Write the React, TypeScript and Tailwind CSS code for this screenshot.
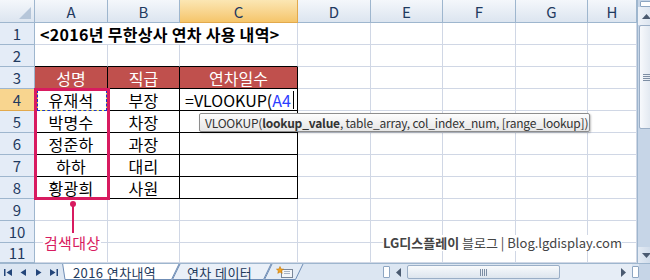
import type { ReactNode } from "react";

const COLS = ["A", "B", "C", "D", "E", "F", "G", "H"];
const NAMES = ["유재석", "박명수", "정준하", "하하", "황광희"];
const TITLES = ["부장", "차장", "과장", "대리", "사원"];
const HEADS = ["성명", "직급", "연차일수"];

function Corner() {
  return (
    <div className="relative border-r border-b border-[#9eb6ce] bg-gradient-to-b from-[#f4f7fb] to-[#dce5f0]">
      <svg className="absolute right-[3px] bottom-[3px]" width="12" height="12" viewBox="0 0 12 12">
        <path d="M12 0V12H0Z" fill="#b6c6d9" />
      </svg>
    </div>
  );
}

function ColHead({ label, active }: { label: string; active: boolean }) {
  return (
    <div
      className={`flex items-center justify-center border-r border-b text-[15px] leading-none text-[#1f3a5f] ${
        active
          ? "border-[#e2a94c] bg-gradient-to-b from-[#fbe6b3] to-[#f5c56a]"
          : "border-[#9eb6ce] bg-gradient-to-b from-[#f4f7fb] to-[#dce5f0]"
      }`}
    >
      {label}
    </div>
  );
}

function RowHead({ n, active }: { n: number; active: boolean }) {
  return (
    <div
      className={`flex items-center justify-center border-r border-b text-[15px] leading-none text-[#1f3a5f] ${
        active ? "border-[#e2a94c] bg-[#f8d58f]" : "border-[#9eb6ce] bg-[#e4ecf7]"
      }`}
    >
      {n}
    </div>
  );
}

function Cell({ r, c }: { r: number; c: number }) {
  const inTable = r >= 3 && r <= 8 && c <= 2;
  const aboveTable = r === 2 && c <= 2;
  const border = inTable
    ? "border-black"
    : aboveTable
      ? "border-r-[#d0d7e5] border-b-black"
      : "border-[#d0d7e5]";

  let content: ReactNode = null;
  let extra = "text-[15px]";
  if (r === 3 && c <= 2) {
    content = HEADS[c];
    extra = "justify-center bg-[#c0504d] text-[16px] text-white";
  } else if (r >= 4 && r <= 8 && c === 0) {
    content = NAMES[r - 4];
    extra = "justify-center text-[16px] tracking-[0.3px]";
  } else if (r >= 4 && r <= 8 && c === 1) {
    content = TITLES[r - 4];
    extra = "justify-center text-[16px] tracking-[0.3px]";
  } else if (r === 4 && c === 2) {
    extra = "pl-[5px] text-[16px]";
    content = (
      <>
        <span>=VLOOKUP(</span>
        <span className="text-[#2b3dff]">A4</span>
        <span className="ml-[2px] h-[18px] w-px bg-black" />
      </>
    );
  }

  return (
    <div
      className={`flex items-center overflow-visible whitespace-nowrap border-r border-b leading-none text-black ${border} ${extra}`}
    >
      {content}
    </div>
  );
}

function Sheet() {
  const cells: ReactNode[] = [<Corner key="corner" />];
  COLS.forEach((c) => cells.push(<ColHead key={c} label={c} active={c === "C"} />));
  for (let r = 1; r <= 11; r++) {
    cells.push(<RowHead key={`h${r}`} n={r} active={r === 4} />);
    if (r === 1) {
      cells.push(
        <div
          key="title"
          className="col-span-3 flex items-center whitespace-nowrap border-r border-b border-[#d0d7e5] pl-[5px] text-[16px] font-bold leading-none tracking-[0.3px] text-black"
        >
          &lt;2016년 무한상사 연차 사용 내역&gt;
        </div>
      );
      COLS.slice(3).forEach((c, i) => cells.push(<Cell key={`${c}1`} r={1} c={i + 3} />));
      continue;
    }
    COLS.forEach((c, i) => cells.push(<Cell key={`${c}${r}`} r={r} c={i} />));
  }

  return (
    <div className="relative grid w-[637px] shrink-0 grid-cols-[35px_73px_72px_118px_73px_72px_73px_72px_49px] grid-rows-[23px_repeat(10,22px)_20px] bg-white">
      {cells}

      {/* range reference ants on A4 */}
      <div className="absolute left-[37px] top-[90px] h-[21px] w-[70px] border border-[#f3e24a]">
        <div className="absolute -inset-px border border-dashed border-[#1d35c9]" />
      </div>

      {/* search target box */}
      <div className="absolute left-[34px] top-[88px] h-[112px] w-[76px] border-[3px] border-[#d81b60]" />
      <div className="absolute left-[70px] top-[201px] size-[6px] rounded-full bg-[#d81b60]" />
      <div className="absolute left-[72px] top-[203px] h-[30px] w-[2px] bg-[#d81b60]" />
      <div className="absolute left-[43px] top-[234px] bg-white px-[1px] text-[15px] leading-[18px] tracking-[0.3px] text-[#d81b60]">
        검색대상
      </div>

      {/* function tooltip */}
      <div className="absolute left-[199px] top-[113px] flex h-[19px] w-[391px] items-center whitespace-nowrap rounded-[2px] border border-[#8d8d8d] bg-gradient-to-b from-[#fdfdfd] to-[#e6e6e6] pl-[5px] text-[12px] leading-none tracking-[-0.2px] text-[#333] shadow-[1px_1px_2px_rgba(0,0,0,0.25)]">
        VLOOKUP(<span className="font-bold">lookup_value</span>, table_array, col_index_num, [range_lookup])
      </div>

      {/* watermark */}
      <div className="absolute left-[383px] top-[235px] whitespace-nowrap bg-white text-[13px] leading-[16px] text-[#444]">
        <span className="font-bold">LG디스플레이</span> 블로그 | Blog.lgdisplay.com
      </div>
    </div>
  );
}

function VScroll() {
  return (
    <div className="flex w-[17px] shrink-0 flex-col border-l border-[#9eb6ce] bg-[#c6d5e7]">
      <div className="mx-[2px] mt-[1px] h-[6px] rounded-[1px] border border-[#8ea6c2] bg-white" />
      <div className="flex h-[18px] items-center justify-center bg-gradient-to-r from-[#eef2f8] to-[#d8e2ee]">
        <svg width="9" height="5" viewBox="0 0 9 5">
          <path d="M4.5 0L9 5H0Z" fill="#4a5a70" />
        </svg>
      </div>
      <div className="mx-[1px] flex h-[104px] items-center justify-center rounded-[2px] border border-[#9aaec6] bg-gradient-to-r from-[#f7f9fc] to-[#dfe6ef]">
        <div className="flex flex-col gap-[1px]">
          <div className="h-px w-[7px] bg-[#7d8ea4]" />
          <div className="h-px w-[7px] bg-[#7d8ea4]" />
          <div className="h-px w-[7px] bg-[#7d8ea4]" />
          <div className="h-px w-[7px] bg-[#7d8ea4]" />
        </div>
      </div>
      <div className="flex-1" />
      <div className="flex h-[16px] items-center justify-center bg-gradient-to-r from-[#e4ebf4] to-[#cbd8e8]">
        <svg width="9" height="5" viewBox="0 0 9 5">
          <path d="M0 0H9L4.5 5Z" fill="#4a5a70" />
        </svg>
      </div>
    </div>
  );
}

function NavButton({ d }: { d: string }) {
  return (
    <div className="flex w-[15px] items-center justify-center">
      <svg width="9" height="9" viewBox="0 0 9 9">
        <path d={d} fill="#24467a" />
      </svg>
    </div>
  );
}

function Tab({
  width,
  points,
  fill,
  children,
  className,
}: {
  width: number;
  points: string;
  fill: string;
  children?: ReactNode;
  className: string;
}) {
  return (
    <div className={`relative flex h-full shrink-0 items-center ${className}`}>
      <svg className="absolute inset-0" width={width} height="16" viewBox={`0 0 ${width} 16`}>
        <polygon points={points} fill={fill} stroke="#6f8db5" strokeWidth="1" />
      </svg>
      {children}
    </div>
  );
}

function TabBar() {
  return (
    <div className="flex h-[17px] items-stretch border-t border-[#9eb6ce] bg-[#dce6f2] text-[13px] leading-[15px] text-[#1e395b]">
      <div className="flex w-[62px] shrink-0 items-stretch pl-[1px]">
        <NavButton d="M0 1H1.5V8H0ZM8 1V8L2.5 4.5Z" />
        <NavButton d="M7 1V8L1.5 4.5Z" />
        <NavButton d="M2 1V8L7.5 4.5Z" />
        <NavButton d="M1 1V8L6.5 4.5ZM7.5 1H9V8H7.5Z" />
      </div>
      <Tab width={118} points="0.5,-1 117.5,-1 109.5,15.5 3,15.5" fill="#ffffff" className="z-20 w-[118px]">
        <span className="relative pl-[11px] tracking-[0.4px]">2016 연차내역</span>
      </Tab>
      <Tab width={100} points="0.5,15.5 8.5,-1 99.5,-1 91.5,15.5" fill="#eaf0f8" className="z-10 -ml-[8px] w-[100px]">
        <span className="relative pl-[15px] tracking-[0.4px]">연차 데이터</span>
      </Tab>
      <Tab width={40} points="0.5,15.5 8.5,-1 39.5,-1 31.5,15.5" fill="#e4ecf6" className="-ml-[8px] w-[40px]">
        <svg className="relative ml-[12px]" width="18" height="13" viewBox="0 0 18 13">
          <rect x="5.5" y="3.5" width="11" height="8" fill="#f4f6f9" stroke="#7b8799" />
          <path d="M8 5.5H14M8 7.5H14" stroke="#a9b4c4" />
          <path
            d="M4 0.5L5 3L7.5 3.2L5.6 4.8L6.2 7.3L4 6L1.8 7.3L2.4 4.8L0.5 3.2L3 3Z"
            fill="#f3a21d"
            stroke="#c47400"
            strokeWidth="0.6"
          />
        </svg>
      </Tab>
      <div className="flex-1" />
      <div className="my-[2px] w-[7px] shrink-0 rounded-[1px] border border-[#8ea6c2] bg-white" />
      <div className="flex w-[17px] shrink-0 items-center justify-center">
        <svg width="5" height="9" viewBox="0 0 5 9">
          <path d="M5 0V9L0 4.5Z" fill="#4a5a70" />
        </svg>
      </div>
      <div className="my-[1px] flex w-[153px] shrink-0 items-center justify-center rounded-[2px] border border-[#9aaec6] bg-gradient-to-b from-[#f8fafc] to-[#dde5ee]">
        <div className="flex gap-[1px]">
          <div className="h-[7px] w-px bg-[#7d8ea4]" />
          <div className="h-[7px] w-px bg-[#7d8ea4]" />
          <div className="h-[7px] w-px bg-[#7d8ea4]" />
          <div className="h-[7px] w-px bg-[#7d8ea4]" />
        </div>
      </div>
      <div className="w-[55px] shrink-0 bg-[#e6edf6]" />
      <div className="flex w-[17px] shrink-0 items-center justify-center bg-[#e6edf6]">
        <svg width="5" height="9" viewBox="0 0 5 9">
          <path d="M0 0V9L5 4.5Z" fill="#4a5a70" />
        </svg>
      </div>
      <div className="my-[2px] w-[7px] shrink-0 rounded-[1px] border border-[#8ea6c2] bg-white" />
      <div className="w-[11px] shrink-0 bg-[#c6d5e7]" />
    </div>
  );
}

export default function App() {
  return (
    <div className="h-[280px] w-[650px] overflow-hidden bg-white font-['Noto_Sans_CJK_KR',sans-serif]">
      <div className="flex h-[263px]">
        <Sheet />
        <VScroll />
      </div>
      <TabBar />
    </div>
  );
}
